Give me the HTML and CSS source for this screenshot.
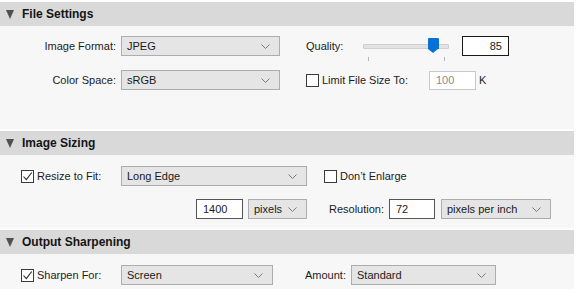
FILE: index.html
```html
<!DOCTYPE html>
<html lang="en">
<head>
    <meta charset="UTF-8">
    <title>Export Settings</title>
    <link rel="stylesheet" href="styles.css">
</head>
<body>

<div class="panel">

    <div class="section">
        <div class="header"><span class="arrow"></span>File Settings</div>
        <div class="body body-file">
            <div class="row">
                <label class="label">Image Format:</label>
                <div class="select w-format"><span>JPEG</span><svg class="chev" width="9" height="5" viewBox="0 0 9 5"><path d="M0.5 0.5 L4.5 4.5 L8.5 0.5" fill="none" stroke="#7a7a7a" stroke-width="1"/></svg></div>
                <span class="text quality-label">Quality:</span>
                <div class="slider">
                    <div class="track"></div>
                    <div class="thumb"></div>
                    <span class="tick tick-left"></span>
                    <span class="tick tick-right"></span>
                </div>
                <div class="field field-strong quality-value">85</div>
            </div>
            <div class="row">
                <label class="label">Color Space:</label>
                <div class="select w-format"><span>sRGB</span><svg class="chev" width="9" height="5" viewBox="0 0 9 5"><path d="M0.5 0.5 L4.5 4.5 L8.5 0.5" fill="none" stroke="#7a7a7a" stroke-width="1"/></svg></div>
                <span class="box limit-box"></span>
                <span class="text limit-label">Limit File Size To:</span>
                <div class="field field-off limit-value">100</div>
                <span class="text unit">K</span>
            </div>
        </div>
    </div>

    <div class="section">
        <div class="header"><span class="arrow"></span>Image Sizing</div>
        <div class="body body-size">
            <div class="row">
                <span class="box check-box"><svg width="11" height="11" viewBox="0 0 11 11"><path d="M1.5 5.5 L4.3 8.7 L9.8 1.5" fill="none" stroke="#2a2a2a" stroke-width="1.1"/></svg></span>
                <span class="text check-label">Resize to Fit:</span>
                <div class="select w-edge"><span>Long Edge</span><svg class="chev" width="9" height="5" viewBox="0 0 9 5"><path d="M0.5 0.5 L4.5 4.5 L8.5 0.5" fill="none" stroke="#7a7a7a" stroke-width="1"/></svg></div>
                <span class="box enlarge-box"></span>
                <span class="text enlarge-label">Don’t Enlarge</span>
            </div>
            <div class="row">
                <div class="field size-value">1400</div>
                <div class="select w-pixels"><span>pixels</span><svg class="chev" width="9" height="5" viewBox="0 0 9 5"><path d="M0.5 0.5 L4.5 4.5 L8.5 0.5" fill="none" stroke="#7a7a7a" stroke-width="1"/></svg></div>
                <span class="text res-label">Resolution:</span>
                <div class="field res-value">72</div>
                <div class="select w-ppi"><span>pixels per inch</span><svg class="chev" width="9" height="5" viewBox="0 0 9 5"><path d="M0.5 0.5 L4.5 4.5 L8.5 0.5" fill="none" stroke="#7a7a7a" stroke-width="1"/></svg></div>
            </div>
        </div>
    </div>

    <div class="section">
        <div class="header"><span class="arrow"></span>Output Sharpening</div>
        <div class="body body-sharp">
            <div class="row">
                <span class="box check-box"><svg width="11" height="11" viewBox="0 0 11 11"><path d="M1.5 5.5 L4.3 8.7 L9.8 1.5" fill="none" stroke="#2a2a2a" stroke-width="1.1"/></svg></span>
                <span class="text check-label">Sharpen For:</span>
                <div class="select w-screen"><span>Screen</span><svg class="chev" width="9" height="5" viewBox="0 0 9 5"><path d="M0.5 0.5 L4.5 4.5 L8.5 0.5" fill="none" stroke="#7a7a7a" stroke-width="1"/></svg></div>
                <span class="text amount-label">Amount:</span>
                <div class="select w-amount"><span>Standard</span><svg class="chev" width="9" height="5" viewBox="0 0 9 5"><path d="M0.5 0.5 L4.5 4.5 L8.5 0.5" fill="none" stroke="#7a7a7a" stroke-width="1"/></svg></div>
            </div>
        </div>
    </div>

</div>

</body>
</html>
```

FILE: styles.css
```css
* {
    box-sizing: border-box;
}
body {
    margin: 0;
    background-color: #ffffff;
    font-family: "Liberation Sans", Arial, sans-serif;
    font-size: 11px;
    color: #1c1c1c;
}
.panel {
    width: 574px;
    height: 289px;
    overflow: hidden;
}
.section {
    padding-top: 2px;
}
.header {
    height: 24px;
    background-color: #d9d9d9;
    display: flex;
    align-items: center;
    font-size: 12px;
    font-weight: bold;
    color: #141414;
}
.arrow {
    width: 0;
    height: 0;
    margin-left: 6px;
    margin-right: 8px;
    border-left: 4.5px solid transparent;
    border-right: 4.5px solid transparent;
    border-top: 9px solid #505050;
}
.body {
    background-color: #f7f7f7;
    display: flex;
    flex-direction: column;
}
.body-file {
    height: 103px;
    padding-top: 10px;
    gap: 14px;
}
.body-size {
    height: 73px;
    padding-top: 11px;
    gap: 13px;
}
.body-sharp {
    height: 40px;
    padding-top: 11px;
}
.row {
    display: flex;
    align-items: center;
    height: 20px;
}
.label {
    width: 116px;
    text-align: right;
    margin-right: 5px;
}
.text {
    white-space: nowrap;
}
.select {
    height: 20px;
    border: 1px solid #adadad;
    background-color: #e5e5e5;
    display: flex;
    align-items: center;
    justify-content: space-between;
    padding: 0 9px 0 5px;
    color: #1a1a1a;
}
.chev {
    display: block;
}
.w-format { width: 159px; }
.w-edge { width: 186px; }
.w-pixels { width: 59px; margin-left: 5px; }
.w-ppi { width: 110px; margin-left: 6px; }
.w-screen { width: 152px; }
.w-amount { width: 145px; margin-left: 12px; }

.field {
    height: 20px;
    border: 1px solid #555555;
    background-color: #ffffff;
    display: flex;
    align-items: center;
    padding: 0 6px;
}
.field-strong {
    border-color: #1a1a1a;
    justify-content: flex-end;
}
.field-off {
    border-color: #c8c8c8;
    color: #8a8a8a;
    height: 19px;
}

.quality-label {
    margin-left: 26px;
    width: 57px;
}
.slider {
    position: relative;
    width: 86px;
    height: 20px;
}
.track {
    position: absolute;
    left: 0;
    right: 0;
    top: 8px;
    height: 5px;
    background-color: #e2e2e2;
    border: 1px solid #cfcfcf;
    border-radius: 1px;
}
.thumb {
    position: absolute;
    left: 65px;
    top: 2px;
    width: 11px;
    height: 11px;
    background-color: #0a6fd6;
    border-radius: 1px 1px 0 0;
}
.thumb::after {
    content: "";
    position: absolute;
    left: 0;
    top: 11px;
    border-left: 5.5px solid transparent;
    border-right: 5.5px solid transparent;
    border-top: 4px solid #0a6fd6;
}
.tick {
    position: absolute;
    top: 21px;
    width: 1px;
    height: 4px;
    background-color: #b5b5b5;
}
.tick-left { left: 5px; }
.tick-right { left: 81px; }
.quality-value {
    width: 47px;
    margin-left: 13px;
}

.box {
    width: 13px;
    height: 13px;
    border: 1px solid #3a3a3a;
    background-color: #ffffff;
    display: flex;
    align-items: center;
    justify-content: center;
}
.limit-box { margin-left: 26px; }
.limit-label {
    margin-left: 3px;
    width: 107px;
}
.limit-value { width: 47px; }
.unit { margin-left: 3px; }

.check-box { margin-left: 21px; }
.check-label {
    margin-left: 3px;
    width: 84px;
}
.enlarge-box { margin-left: 17px; }
.enlarge-label { margin-left: 3px; }

.size-value {
    width: 47px;
    margin-left: 196px;
}
.res-label {
    margin-left: 22px;
    width: 60px;
}
.res-value { width: 46px; }

.amount-label {
    margin-left: 32px;
    width: 34px;
}
```
